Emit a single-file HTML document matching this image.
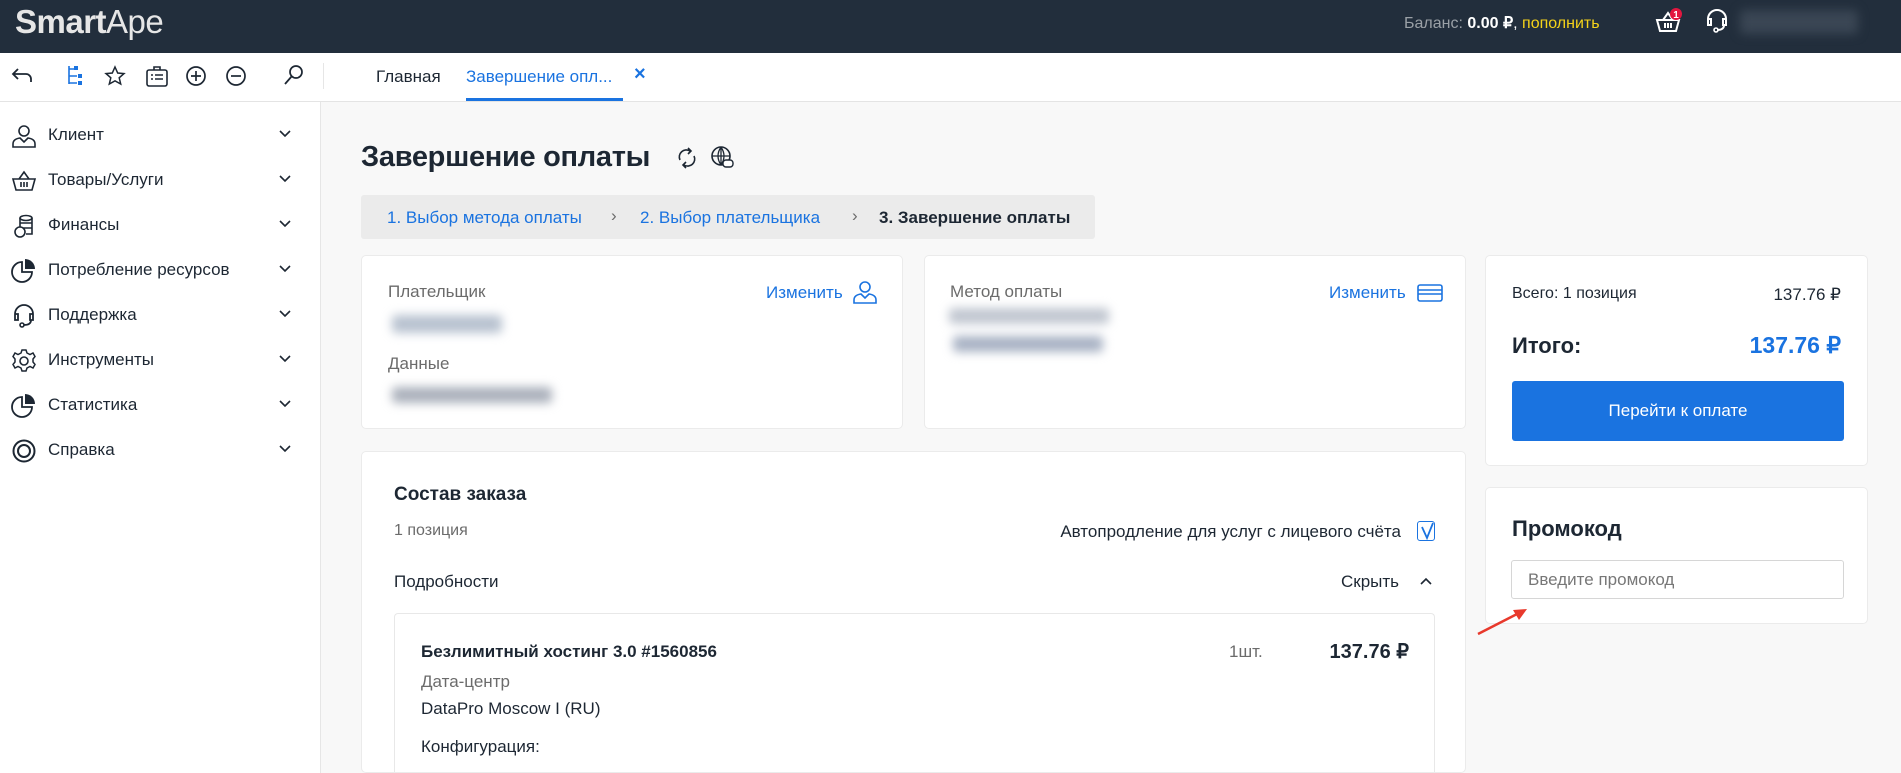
<!DOCTYPE html>
<html style="overflow:hidden;height:773px"><head><meta charset="utf-8">
<style>
*{margin:0;padding:0;box-sizing:border-box}
html,body{width:1901px;height:773px;overflow:hidden}
body{background:#f8f8f8;font-family:"Liberation Sans",sans-serif;color:#1d2733;position:relative}
.abs{position:absolute}
.hdr{left:0;top:0;width:1901px;height:53px;background:#222e3c}
.tb{left:0;top:53px;width:1901px;height:49px;background:#fff;border-bottom:1px solid #e4e4e4}
.side{left:0;top:102px;width:321px;height:671px;background:#fff;border-right:1px solid #e6e6e6}
.si{position:absolute;left:0;width:321px;height:30px;font-size:17px;color:#1d2733}
.si span{position:absolute;left:48px;top:5px}
.si svg.ic{position:absolute;left:11px;top:3px}
.si svg.ch{position:absolute;left:278px;top:9px}
.card{background:#fff;border:1px solid #ebebeb;border-radius:5px;position:absolute}
.blue{color:#1a73e0}
.gray{color:#6b6b6b}
.blur{position:absolute;filter:blur(5px);border-radius:4px}
</style></head><body>
<div class="abs hdr">
 <div class="abs" style="left:15px;top:3px;font-size:33px;color:#e6e6e6;letter-spacing:-0.5px"><b>Smart</b><span style="font-weight:normal">Ape</span></div>
 <div class="abs" style="left:1404px;top:13px;font-size:16px;color:#9aa0a6">Баланс: <b style="color:#fff">0.00 ₽</b><span style="color:#fff">,</span> <span style="color:#f5d31a">пополнить</span></div>
 <svg class="abs" style="left:1654px;top:8px" width="30" height="28" viewBox="0 0 30 28"><path d="M3 12h22l-3 11H6z M9 12l5-7 5 7 M11 15v5 M14 15v5 M17 15v5" fill="none" stroke="#fff" stroke-width="2"/><circle cx="22" cy="6" r="6" fill="#e3163f"/><text x="22" y="10" font-size="10" fill="#fff" text-anchor="middle" font-weight="bold" font-family="Liberation Sans">1</text></svg>
 <svg class="abs" style="left:1704px;top:8px" width="26" height="26" viewBox="0 0 26 26"><path d="M4 14V11a9 9 0 0 1 18 0v3 M4 12v5h3v-6H4 M22 12v5h-3v-6h3 M20 17q0 5-7 5" fill="none" stroke="#fff" stroke-width="2"/><circle cx="12" cy="22" r="2" fill="none" stroke="#fff" stroke-width="1.6"/></svg>
 <div class="blur" style="left:1740px;top:10px;width:118px;height:24px;background:#3a4654"></div>
</div>
<div class="abs tb">
 <svg class="abs" style="left:10px;top:13px" width="24" height="22" viewBox="0 0 24 22"><path d="M21 16v-3a5 5 0 0 0-5-5H3 M8 3L3 8l5 5" fill="none" stroke="#1d2733" stroke-width="1.8"/></svg>
 <svg class="abs" style="left:65px;top:11px" width="22" height="24" viewBox="0 0 22 24"><path d="M4 2v18 M4 5h5 M4 12h8 M4 19h8" fill="none" stroke="#1a73e0" stroke-width="1.6"/><rect x="9" y="2" width="4" height="4" fill="#1a73e0"/><rect x="13" y="10" width="4" height="4" fill="#1a73e0"/><rect x="13" y="17" width="4" height="4" fill="#1a73e0"/></svg>
 <svg class="abs" style="left:104px;top:12px" width="22" height="22" viewBox="0 0 22 22"><path d="M11 2l2.7 6 6.3.6-4.8 4.2 1.5 6.2L11 15.8 5.3 19l1.5-6.2L2 8.6l6.3-.6z" fill="none" stroke="#1d2733" stroke-width="1.5"/></svg>
 <svg class="abs" style="left:145px;top:11px" width="24" height="24" viewBox="0 0 24 24"><rect x="2" y="6" width="20" height="16" rx="2" fill="none" stroke="#1d2733" stroke-width="1.6"/><path d="M9 6V3h6v3 M6 11h2 M10 11h8 M6 15h2 M10 15h8" stroke="#1d2733" stroke-width="1.6" fill="none"/></svg>
 <svg class="abs" style="left:185px;top:12px" width="22" height="22" viewBox="0 0 22 22"><circle cx="11" cy="11" r="9" fill="none" stroke="#1d2733" stroke-width="1.7"/><path d="M6 11h10 M11 6v10" stroke="#1d2733" stroke-width="1.7"/></svg>
 <svg class="abs" style="left:225px;top:12px" width="22" height="22" viewBox="0 0 22 22"><circle cx="11" cy="11" r="9" fill="none" stroke="#1d2733" stroke-width="1.7"/><path d="M6 11h10" stroke="#1d2733" stroke-width="1.7"/></svg>
 <svg class="abs" style="left:283px;top:11px" width="22" height="22" viewBox="0 0 22 22"><circle cx="13" cy="8" r="6" fill="none" stroke="#1d2733" stroke-width="1.7"/><path d="M9 12l-7 8" stroke="#1d2733" stroke-width="1.8"/></svg>
 <div class="abs" style="left:323px;top:10px;width:1px;height:26px;background:#e6e6e6"></div>
 <div class="abs" style="left:376px;top:14px;font-size:17px">Главная</div>
 <div class="abs blue" style="left:466px;top:14px;font-size:17px">Завершение опл...</div>
 <div class="abs blue" style="left:634px;top:10px;font-size:20px;font-weight:bold">×</div>
 <div class="abs" style="left:466px;top:45px;width:157px;height:3px;background:#1a73e0"></div>
</div>
<div class="abs side">
 <div class="si" style="top:18px"><svg class="ic" width="26" height="26" viewBox="0 0 26 26"><circle cx="13" cy="8" r="5" fill="none" stroke="#1d2733" stroke-width="1.6"/><path d="M2 24v-3q0-5 7-6l4 4 4-4q7 1 7 6v3z" fill="none" stroke="#1d2733" stroke-width="1.6"/></svg><span>Клиент</span><svg class="ch" width="14" height="10"><path d="M2 2l5 5 5-5" fill="none" stroke="#1d2733" stroke-width="1.6"/></svg></div>
 <div class="si" style="top:63px"><svg class="ic" width="26" height="26" viewBox="0 0 26 26"><path d="M2 11h22l-3 11H5z M8 11l5-7 5 7 M10 14v5 M13 14v5 M16 14v5" fill="none" stroke="#1d2733" stroke-width="1.6"/></svg><span>Товары/Услуги</span><svg class="ch" width="14" height="10"><path d="M2 2l5 5 5-5" fill="none" stroke="#1d2733" stroke-width="1.6"/></svg></div>
 <div class="si" style="top:108px"><svg class="ic" width="26" height="26" viewBox="0 0 26 26"><ellipse cx="15" cy="5" rx="6" ry="2.5" fill="none" stroke="#1d2733" stroke-width="1.6"/><path d="M9 5v14 M21 5v16h-6 M9 10h12 M9 15h12" fill="none" stroke="#1d2733" stroke-width="1.6"/><circle cx="9" cy="19" r="5" fill="#fff" stroke="#1d2733" stroke-width="1.6"/></svg><span>Финансы</span><svg class="ch" width="14" height="10"><path d="M2 2l5 5 5-5" fill="none" stroke="#1d2733" stroke-width="1.6"/></svg></div>
 <div class="si" style="top:153px"><svg class="ic" width="26" height="26" viewBox="0 0 26 26"><path d="M11 4a10 10 0 1 0 10 10H11z" fill="none" stroke="#1d2733" stroke-width="1.8"/><path d="M14 1a10 10 0 0 1 10 10H14z" fill="#1d2733"/></svg><span>Потребление ресурсов</span><svg class="ch" width="14" height="10"><path d="M2 2l5 5 5-5" fill="none" stroke="#1d2733" stroke-width="1.6"/></svg></div>
 <div class="si" style="top:198px"><svg class="ic" width="26" height="26" viewBox="0 0 26 26"><path d="M4 15V11a9 9 0 0 1 18 0v4 M4 12v5h3v-6H4 M22 12v5h-3v-6h3 M20 17q0 5-7 5" fill="none" stroke="#1d2733" stroke-width="1.8"/><circle cx="11" cy="22" r="2" fill="none" stroke="#1d2733" stroke-width="1.6"/></svg><span>Поддержка</span><svg class="ch" width="14" height="10"><path d="M2 2l5 5 5-5" fill="none" stroke="#1d2733" stroke-width="1.6"/></svg></div>
 <div class="si" style="top:243px"><svg class="ic" width="26" height="26" viewBox="0 0 26 26"><circle cx="13" cy="13" r="4" fill="none" stroke="#1d2733" stroke-width="1.6"/><path d="M11 2h4l1 3 3 1.5 3-1.5 2 3.5-2 2.5v3l2 2.5-2 3.5-3-1.5-3 1.5-1 3h-4l-1-3-3-1.5-3 1.5-2-3.5 2-2.5v-3L2 8.5 4 5l3 1.5L10 5z" fill="none" stroke="#1d2733" stroke-width="1.5"/></svg><span>Инструменты</span><svg class="ch" width="14" height="10"><path d="M2 2l5 5 5-5" fill="none" stroke="#1d2733" stroke-width="1.6"/></svg></div>
 <div class="si" style="top:288px"><svg class="ic" width="26" height="26" viewBox="0 0 26 26"><path d="M11 4a10 10 0 1 0 10 10H11z" fill="none" stroke="#1d2733" stroke-width="1.8"/><path d="M14 1a10 10 0 0 1 10 10H14z" fill="#1d2733"/></svg><span>Статистика</span><svg class="ch" width="14" height="10"><path d="M2 2l5 5 5-5" fill="none" stroke="#1d2733" stroke-width="1.6"/></svg></div>
 <div class="si" style="top:333px"><svg class="ic" width="26" height="26" viewBox="0 0 26 26"><circle cx="13" cy="13" r="10.5" fill="none" stroke="#1d2733" stroke-width="2"/><circle cx="13" cy="13" r="6" fill="none" stroke="#1d2733" stroke-width="2"/></svg><span>Справка</span><svg class="ch" width="14" height="10"><path d="M2 2l5 5 5-5" fill="none" stroke="#1d2733" stroke-width="1.6"/></svg></div>
</div>

<div class="abs" style="left:361px;top:141px;font-size:29px;font-weight:bold;color:#1d2733;letter-spacing:-0.3px">Завершение оплаты</div>
<svg class="abs" style="left:676px;top:146px" width="22" height="24" viewBox="0 0 22 24"><path d="M4 14a7 7 0 0 1 10-9 M18 10a7 7 0 0 1-10 9 M12 2l3 3-3 3 M10 22l-3-3 3-3" fill="none" stroke="#1d2733" stroke-width="1.6"/></svg>
<svg class="abs" style="left:710px;top:145px" width="25" height="25" viewBox="0 0 25 25"><circle cx="11" cy="11" r="9" fill="none" stroke="#1d2733" stroke-width="1.6"/><path d="M2 11h18 M11 2v18 M11 2q-6 9 0 18 M11 2q6 9 0 18" fill="none" stroke="#1d2733" stroke-width="1.3"/><rect x="13" y="15" width="10" height="7" rx="3" fill="#fff" stroke="#1d2733" stroke-width="1.4"/></svg>

<div class="abs" style="left:361px;top:195px;width:734px;height:44px;background:#ebebeb;border-radius:3px;font-size:17px">
 <span class="abs blue" style="left:26px;top:13px">1. Выбор метода оплаты</span>
 <span class="abs gray" style="left:250px;top:11px">›</span>
 <span class="abs blue" style="left:279px;top:13px">2. Выбор плательщика</span>
 <span class="abs gray" style="left:491px;top:11px">›</span>
 <span class="abs" style="left:518px;top:13px;font-weight:bold">3. Завершение оплаты</span>
</div>

<div class="card" style="left:361px;top:255px;width:542px;height:174px">
 <div class="abs gray" style="left:26px;top:26px;font-size:17px">Плательщик</div>
 <div class="blur" style="left:30px;top:59px;width:110px;height:18px;background:#b8c2d0"></div>
 <div class="abs gray" style="left:26px;top:98px;font-size:17px">Данные</div>
 <div class="blur" style="left:30px;top:131px;width:160px;height:16px;background:#aab0bb"></div>
 <div class="abs blue" style="left:404px;top:27px;font-size:17px">Изменить</div>
 <svg class="abs" style="left:490px;top:23px" width="26" height="26" viewBox="0 0 26 26"><circle cx="13" cy="8" r="5" fill="none" stroke="#1a73e0" stroke-width="1.6"/><path d="M2 24v-3q0-5 7-6l4 4 4-4q7 1 7 6v3z" fill="none" stroke="#1a73e0" stroke-width="1.6"/></svg>
</div>
<div class="card" style="left:924px;top:255px;width:542px;height:174px">
 <div class="abs gray" style="left:25px;top:26px;font-size:17px">Метод оплаты</div>
 <div class="blur" style="left:24px;top:52px;width:160px;height:16px;background:#c0c6d0"></div>
 <div class="blur" style="left:28px;top:80px;width:150px;height:16px;background:#a8b2c4"></div>
 <div class="abs blue" style="left:404px;top:27px;font-size:17px">Изменить</div>
 <svg class="abs" style="left:492px;top:27px" width="26" height="20" viewBox="0 0 26 20"><rect x="1" y="2" width="24" height="16" rx="2" fill="none" stroke="#1a73e0" stroke-width="1.6"/><path d="M1 7h24 M1 11h24" stroke="#1a73e0" stroke-width="1.6"/></svg>
</div>

<div class="card" style="left:361px;top:451px;width:1105px;height:322px;overflow:hidden">
 <div class="abs" style="left:32px;top:32px;font-size:19px;font-weight:bold">Состав заказа</div>
 <div class="abs gray" style="left:32px;top:70px;font-size:16px">1 позиция</div>
 <div class="abs" style="right:64px;top:70px;font-size:17px">Автопродление для услуг с лицевого счёта</div>
 <div class="abs" style="left:1055px;top:69px;width:18px;height:20px;border:1.5px solid #1a73e0;border-radius:3px"></div>
 <svg class="abs" style="left:1057px;top:69px" width="16" height="20"><path d="M3 6l5 11 6-15" fill="none" stroke="#1a73e0" stroke-width="1.8"/></svg>
 <div class="abs" style="left:32px;top:120px;font-size:17px">Подробности</div>
 <div class="abs" style="left:979px;top:120px;font-size:17px">Скрыть</div>
 <svg class="abs" style="left:1057px;top:124px" width="14" height="10"><path d="M2 8l5-5 5 5" fill="none" stroke="#1d2733" stroke-width="1.6"/></svg>
 <div class="abs" style="left:32px;top:161px;width:1041px;height:160px;border:1px solid #e8e8e8;border-bottom:none;border-radius:4px 4px 0 0;background:#fff">
  <div class="abs" style="left:26px;top:28px;font-size:17px;font-weight:bold">Безлимитный хостинг 3.0 #1560856</div>
  <div class="abs gray" style="left:834px;top:28px;font-size:17px">1шт.</div>
  <div class="abs" style="right:25px;top:25px;font-size:20px;font-weight:bold">137.76 ₽</div>
  <div class="abs gray" style="left:26px;top:58px;font-size:17px">Дата-центр</div>
  <div class="abs" style="left:26px;top:85px;font-size:17px">DataPro Moscow I (RU)</div>
  <div class="abs" style="left:26px;top:123px;font-size:17px">Конфигурация:</div>
 </div>
</div>

<div class="card" style="left:1485px;top:255px;width:383px;height:211px">
 <div class="abs" style="left:26px;top:29px;font-size:16px">Всего: 1 позиция</div>
 <div class="abs" style="right:26px;top:29px;font-size:17px">137.76 ₽</div>
 <div class="abs" style="left:26px;top:77px;font-size:22px;font-weight:bold">Итого:</div>
 <div class="abs blue" style="right:26px;top:76px;font-size:23px;font-weight:bold">137.76 ₽</div>
 <div class="abs" style="left:26px;top:125px;width:332px;height:60px;background:#1a73e0;border-radius:3px;color:#fff;font-size:17px;text-align:center;line-height:60px">Перейти к оплате</div>
</div>
<div class="card" style="left:1485px;top:487px;width:383px;height:137px">
 <div class="abs" style="left:26px;top:28px;font-size:22px;font-weight:bold">Промокод</div>
 <div class="abs" style="left:25px;top:72px;width:333px;height:39px;border:1px solid #d6d6d6;border-radius:3px;color:#777;font-size:17px;padding:9px 0 0 16px">Введите промокод</div>
</div>
<svg class="abs" style="left:1475px;top:603px" width="60" height="35" viewBox="0 0 60 35"><path d="M3 31L44 10" stroke="#e8392c" stroke-width="2.5"/><path d="M52 6L38 7l6 10z" fill="#e8392c"/></svg>
</body></html>
